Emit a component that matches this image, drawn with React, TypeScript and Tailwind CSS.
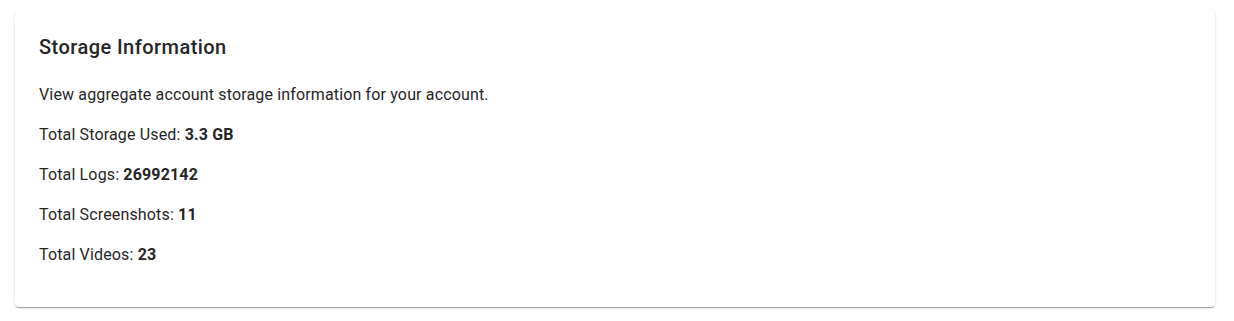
export default function App() {
  const rows: [string, string][] = [
    ["Total Storage Used:", "3.3 GB"],
    ["Total Logs:", "26992142"],
    ["Total Screenshots:", "11"],
    ["Total Videos:", "23"],
  ];
  return (
    <div className="min-h-[321px] bg-white pt-[11px] px-[15px] pb-[15px] font-['Roboto',sans-serif] text-[#262626]">
      <div className="w-[1200px] rounded bg-white p-6 pb-6 shadow-[0_2px_1px_-1px_rgba(0,0,0,0.2),0_1px_1px_0_rgba(0,0,0,0.14),0_1px_3px_0_rgba(0,0,0,0.12)]">
        <h2 className="text-[20px] leading-6 font-medium tracking-[0.45px] mb-6">Storage Information</h2>
        <p className="text-[16px] leading-6 tracking-[0.00938em] mb-4">View aggregate account storage information for your account.</p>
        {rows.map(([k, v]) => (
          <p key={k} className="text-[16px] leading-6 tracking-[0.00938em] mb-4">
            {k} <span className="font-bold">{v}</span>
          </p>
        ))}
      </div>
    </div>
  );
}
